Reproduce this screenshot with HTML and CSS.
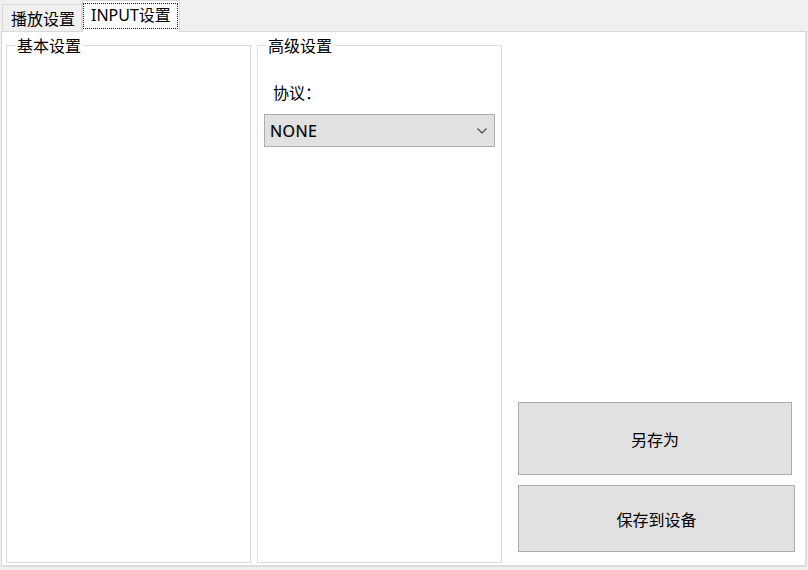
FILE: index.html
```html
<!DOCTYPE html>
<html lang="zh-CN">
<head>
<meta charset="utf-8">
<title>INPUT设置</title>
<link rel="stylesheet" href="styles.css">
</head>
<body>
<div class="window">
  <div class="tabs">
    <div class="tab">播放设置</div>
    <div class="tab active"><span class="focus">INPUT设置</span></div>
  </div>
  <div class="panel">
    <div class="group">
      <span class="legend">基本设置</span>
    </div>
    <div class="group">
      <span class="legend">高级设置</span>
      <div class="group-body">
        <div class="field-label">协议：</div>
        <div class="combo">
          <span class="combo-text">NONE</span>
          <svg class="chev" width="12" height="8" viewBox="0 0 12 8"><path d="M1.5 1.5 L6 6 L10.5 1.5" fill="none" stroke="#444" stroke-width="1.1"/></svg>
        </div>
      </div>
    </div>
    <div class="actions">
      <div class="btn btn-save-as">另存为</div>
      <div class="btn btn-save-dev">保存到设备</div>
    </div>
  </div>
</div>
</body>
</html>
```
FILE: styles.css
```css
html, body {
  margin: 0;
  padding: 0;
  background: #f0f0f0;
}
body {
  font-family: "Microsoft YaHei", "Noto Sans CJK SC", "Noto Sans", sans-serif;
  font-size: 16px;
  color: #000;
}
.window {
  width: 808px;
  height: 570px;
  display: flex;
  flex-direction: column;
}
.tabs {
  display: flex;
  align-items: flex-end;
  height: 31px;
  padding-left: 2px;
  position: relative;
  z-index: 2;
}
.tab {
  box-sizing: border-box;
  height: 27px;
  padding: 0 6px 0 8px;
  border: 1px solid #d9d9d9;
  border-bottom: none;
  background: #f0f0f0;
  line-height: 26px;
}
.tab.active {
  height: 32px;
  margin-bottom: -1px;
  background: #fff;
  padding: 2px 1px 0 0;
  line-height: 23px;
}
.focus {
  display: block;
  border: 1px dotted #222;
  padding: 0 6px 0 7px;
  height: 24px;
  font-family: "Noto Sans", "Noto Sans CJK SC", sans-serif;
}
.panel {
  box-sizing: border-box;
  margin: 0 1px 3px 1px;
  height: 536px;
  background: #fff;
  border: 1px solid #d9d9d9;
  border-right: 2px solid #dcdcdc;
  border-bottom: 2px solid #dcdcdc;
  display: flex;
  padding: 13px 0 2px 4px;
  gap: 6px;
}
.group {
  box-sizing: border-box;
  width: 245px;
  border: 1px solid #dcdcdc;
  display: flex;
  flex-direction: column;
}
.legend {
  align-self: flex-start;
  margin: -11px 0 0 8px;
  padding: 0 2px;
  background: #fff;
  line-height: 20px;
}
.group-body {
  padding: 27px 0 0 6px;
}
.field-label {
  padding-left: 9px;
  line-height: 20px;
  margin-bottom: 12px;
}
.combo {
  box-sizing: border-box;
  width: 231px;
  height: 33px;
  background: #e1e1e1;
  border: 1px solid #adadad;
  display: flex;
  align-items: center;
  justify-content: space-between;
  padding: 0 6px 0 5px;
}
.combo-text {
  font-family: "Noto Sans", "Noto Sans CJK SC", sans-serif;
  font-size: 16px;
  letter-spacing: 0.4px;
  -webkit-text-stroke: 0.2px #000;
}
.actions {
  margin-left: 10px;
  display: flex;
  flex-direction: column;
  justify-content: flex-end;
  gap: 10px;
  padding-bottom: 11px;
}
.btn {
  box-sizing: border-box;
  background: #e1e1e1;
  border: 1px solid #adadad;
  display: flex;
  align-items: center;
  justify-content: center;
}
.btn-save-as {
  width: 274px;
  height: 73px;
}
.btn-save-dev {
  width: 277px;
  height: 67px;
}
```
